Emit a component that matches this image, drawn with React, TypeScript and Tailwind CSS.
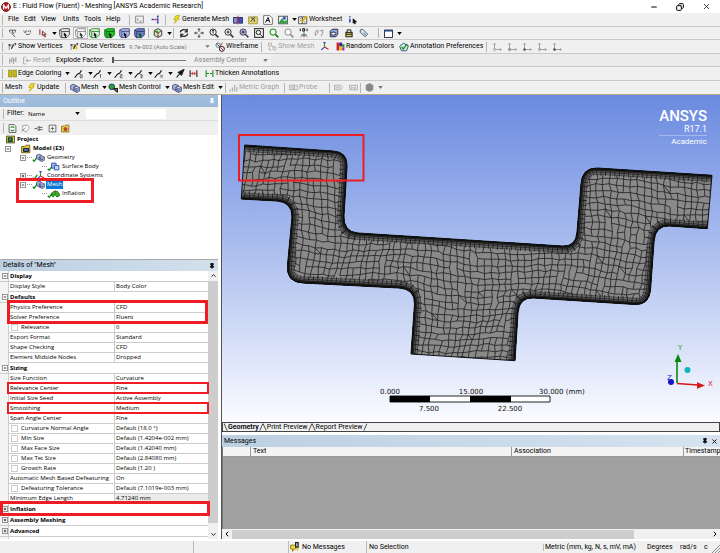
import * as React from "react";
import { Pin, X, Minus, Copy, ChevronLeft, ChevronRight, ChevronUp, ChevronDown } from "lucide-react";

type IconProps = { className?: string; children: React.ReactNode };

const Svg = ({ className = "size-[9px]", children }: IconProps) => (
  <svg viewBox="0 0 16 16" className={`${className} shrink-0`} fill="none" stroke="#222" strokeWidth="1.6">
    {children}
  </svg>
);

const Caret = ({ className = "text-black" }: { className?: string }) => (
  <svg viewBox="0 0 6 4" className={`h-[3px] w-[5px] shrink-0 ${className}`} fill="currentColor">
    <path d="M0 0h6L3 4z" />
  </svg>
);

const Sep = ({ className = "" }: { className?: string }) => (
  <span className={`h-[10px] w-px shrink-0 bg-[#b4b4b4] ${className}`} />
);

const Bolt = () => (
  <Svg>
    <path d="M7 1h7l-4 5h3L4 15l3-7H3z" fill="#f4dc10" stroke="#a89010" strokeWidth="1" />
  </Svg>
);

const Cube = ({ face = "#eee", edge = "#333", mark = "#111" }) => (
  <Svg className="size-[11px]">
    <path d="M1 3l4-2h10v9l-4 4H3L1 11z" fill={face} stroke={edge} strokeWidth="1.2" />
    <path d="M1 3l3 2h11M4 5v9" stroke={edge} strokeWidth="1.2" />
    <path d="M7 6l5 5h-2l1 3h-2l-1-3-1 1z" fill={mark} stroke="none" />
  </Svg>
);

const MeshCube = ({ className = "size-[10px]" }: { className?: string }) => (
  <Svg className={className}>
    <path d="M1 4l4-2 5 2v6l-4 2-5-2z" fill="#a9b4dc" stroke="#26336f" strokeWidth="1.2" />
    <path d="M6 7l4-2 5 2v6l-4 2-5-2z" fill="#dfe4f6" stroke="#26336f" strokeWidth="1.2" />
    <path d="M6 7l5 2v6M11 9l4-2M8 8v6M6 10l5 2 4-2" stroke="#26336f" strokeWidth="1" />
  </Svg>
);

const Lens = ({ color = "#333", fill = "#fff", sign = "" }) => (
  <Svg className="size-[10px]">
    <circle cx="6.5" cy="6.5" r="5" fill={fill} stroke={color} />
    <path d="M10 10l5 5" stroke={color} strokeWidth="2.5" />
    {sign !== "" && <path d={sign} stroke="#223" />}
  </Svg>
);

const Triad = ({ origin = "#777" }: { origin?: string }) => (
  <Svg className="size-[10px]">
    <path d="M4 12V2M2 4l2-2 2 2M4 12h11M13 10l2 2-2 2" stroke="#888" strokeWidth="1.2" />
    <circle cx="4" cy="12" r="1.8" fill={origin} stroke="#777" strokeWidth="1" />
  </Svg>
);

const ColorTriad = () => (
  <Svg>
    <path d="M8 9V1" stroke="#1aa51a" strokeWidth="2" />
    <path d="M8 9l-6 5M6 1h4" stroke="#2a35d8" strokeWidth="2" />
    <path d="M8 9l7 4" stroke="#e02020" strokeWidth="2" />
  </Svg>
);

const Vertices = ({ fill = "none" }) => (
  <Svg>
    <path d="M2 14V5h12V3M2 5l4 4" stroke="#666" strokeWidth="1.2" />
    <rect x="7" y="6" width="6" height="7" fill={fill} stroke="none" />
    <path d="M1 5h3M6 12l4-7M12 2l2 2" strokeWidth="2" />
  </Svg>
);

const Frame = ({ stroke = "#999" }) => (
  <Svg>
    <path d="M1 2h5v5H1zM7 7l4 2M9 9h5v5H9zM2 9v5h4" stroke={stroke} strokeWidth="1.2" />
  </Svg>
);

const EdgeLine = ({ tag }: { tag: string }) => (
  <Svg className="size-[10px]">
    <path d="M1 14L6 8l3-1 3-5" stroke="#111" strokeWidth="1.8" />
    <path d={tag} stroke="#444" strokeWidth="1.2" />
  </Svg>
);

const Folder = () => (
  <Svg>
    <path d="M1 4h5l2-2h6v12H1z" fill="#f1d548" stroke="#86701a" />
    <circle cx="8" cy="9" r="3" fill="#c8483c" stroke="#722" strokeWidth="1" />
  </Svg>
);

type ToolProps = {
  label: string;
  width: string;
  icon?: React.ReactNode;
  text?: boolean;
  caret?: boolean;
  muted?: boolean;
};

// Toolbar button; icon-only buttons keep their label for assistive tech
const Tool = ({ label, width, icon, text, caret, muted }: ToolProps) => (
  <button
    type="button"
    aria-label={label}
    disabled={muted}
    className={`flex h-[12px] shrink-0 items-center gap-px whitespace-nowrap ${width} ${muted ? "text-[#a0a0a0]" : "text-black"}`}
  >
    {icon}
    {text && <span>{label}</span>}
    {caret && <Caret className={muted ? "ml-[3px] text-[#777]" : "ml-[3px] text-black"} />}
  </button>
);

const Bar = ({ className = "h-[13px]", children }: { className?: string; children: React.ReactNode }) => (
  <div className={`flex shrink-0 items-center overflow-hidden border-b border-[#c9c9c9] bg-[#f0f0f0] pl-[2px] ${className}`}>
    <Sep className="mr-[5px]" />
    {children}
  </div>
);

const menus = [
  { label: "File", width: "w-[16px]" },
  { label: "Edit", width: "w-[17px]" },
  { label: "View", width: "w-[22px]" },
  { label: "Units", width: "w-[21px]" },
  { label: "Tools", width: "w-[22px]" },
  { label: "Help", width: "w-[22px]" },
];

const selectTools: { label: string; icon: React.ReactNode }[] = [
  { label: "Vertex filter", icon: <Cube /> },
  { label: "Edge filter", icon: <Cube face="#fff" edge="#777" mark="#333" /> },
  { label: "Face filter", icon: <Cube face="#dff5df" edge="#1c7a1c" /> },
  { label: "Body filter", icon: <Cube face="#22cc22" edge="#0c5c0c" /> },
  { label: "Element filter", icon: <Cube face="#aab2e6" edge="#3b4378" /> },
  { label: "Node filter", icon: <Cube face="#6f7fc8" edge="#26305f" mark="#0a5a1a" /> },
];

const viewTools: { label: string; icon: React.ReactNode }[] = [
  { label: "Rotate", icon: <Svg className="size-[10px]"><path d="M2 7c1-5 9-6 11-2M14 9c-1 5-9 6-11 2M13 1v5H9M3 15v-5h4" strokeWidth="2" /></Svg> },
  { label: "Pan", icon: <Svg className="size-[10px]"><path d="M8 1v5M8 10v5M1 8h5M10 8h5M6 3l2-2 2 2M6 13l2 2 2-2M3 6L1 8l2 2M13 6l2 2-2 2" strokeWidth="1.3" /></Svg> },
  { label: "Zoom", icon: <Lens sign="M6.5 4v5M4.5 5l2-2 2 2" /> },
  { label: "Zoom in", icon: <Lens sign="M4 6.5h5M6.5 4v5" /> },
  { label: "Box zoom", icon: <Lens color="#445" fill="#b8bff0" sign="M4 6.5h5M6.5 4v5" /> },
  { label: "Zoom to fit", icon: <Svg className="size-[10px]"><rect x="1" y="1" width="14" height="14" /><circle cx="7" cy="7" r="3.5" /><path d="M10 10l4 4" /></Svg> },
  { label: "Zoom to selection", icon: <Lens color="#177a17" fill="#e6ffe6" /> },
  { label: "Magnifier", icon: <Lens color="#888" /> },
  { label: "Previous view", icon: <Svg className="size-[10px]"><path d="M2 1v4M6 1v4h3V1H6M13 1v4" stroke="#111" /><path d="M8 7v8M4 11h8" stroke="#167c74" /><path d="M3 14l3-3M13 14l-3-3" stroke="#d03030" /></Svg> },
  { label: "Next view", icon: <Svg className="size-[10px]"><path d="M2 12V6l4-3v6M9 5l5-2v5l-3 5M2 12l3-3" stroke="#999" /></Svg> },
  { label: "Isometric", icon: <Svg className="size-[10px]"><path d="M2 5l3-3h9v8l-3 4H2z" fill="#86aed8" stroke="#334" /><ellipse cx="7" cy="9" rx="4" ry="2.5" fill="#fff" stroke="#224" /></Svg> },
  { label: "Look at", icon: <Svg className="size-[10px]"><path d="M5 7V3h6v4" /><rect x="3" y="7" width="10" height="7" fill="#d9c95a" /><path d="M3 10h10" /></Svg> },
  { label: "Tags", icon: <Svg className="size-[10px]"><path d="M2 3l4-1 8 8-4 4-8-7z" fill="#d3e6ee" stroke="#567" /><path d="M7 8l4 3" stroke="#567" /></Svg> },
];

const edgeTools = [
  { tag: "M10 9h3v5h-3z", width: "w-[19px]" },
  { tag: "M12 8v6", width: "w-[21px]" },
  { tag: "M10 9h3v2h-3v3h4", width: "w-[20px]" },
  { tag: "M10 9h3v5h-3M10 11h3", width: "w-[20px]" },
  { tag: "M10 9l4 5M14 9l-4 5", width: "w-[22px]" },
];

const Toolbars = () => (
  <div className="shrink-0 border-b border-[#b3a78f] text-[7px] leading-none">
    <Bar className="h-[14px]">
      <nav className="flex">
        {menus.map((m) => (
          <Tool key={m.label} label={m.label} width={m.width} text />
        ))}
      </nav>
      <Sep className="mr-[5px] ml-px" />
      <Tool label="Command window" width="w-[16px]" icon={<Svg><path d="M1 2h14v12H1zM3 6l3 2-3 2M8 11h4" stroke="#888" /></Svg>} />
      <Tool label="Object generator" width="w-[14px]" icon={<Svg><path d="M6 8h4" stroke="#d02020" strokeWidth="2.5" /><path d="M1 8h4M12 1v4M12 6v4M12 11v4" stroke="#3040c0" strokeWidth="3" /></Svg>} />
      <Sep className="mr-[6px]" />
      <Tool label="Generate Mesh" width="w-[61px]" icon={<Bolt />} text />
      <Tool label="Section plane" width="w-[15px]" icon={<Svg className="size-[10px]"><rect x="1" y="4" width="6" height="9" fill="#8592dd" stroke="#26336f" /><rect x="9" y="4" width="6" height="9" fill="#3b50c0" stroke="#26336f" /><path d="M8 1v14" stroke="#d03030" /></Svg>} />
      <Tool label="Comment" width="w-[15px]" icon={<Svg className="size-[10px]"><path d="M1 3h14v11H1z" fill="#e4d66a" stroke="#a89b50" /><path d="M4 11l7-8M5 5h3M10 6v5" stroke="#444" /></Svg>} />
      <Tool label="Text" width="w-[15px]" icon={<Svg className="size-[10px]"><path d="M1 1h10l4 4v10H1z" fill="#fff" stroke="#777" /><path d="M4 12l4-8 3 8M6 9h4" stroke="#111" /></Svg>} />
      <Tool label="Image" width="w-[20px]" caret icon={<Svg className="size-[10px]"><rect x="1" y="2" width="14" height="12" fill="#fff" stroke="#555" /><path d="M2 11l4-6 4 5 4-3v6H2z" fill="#2ba43a" stroke="none" /><circle cx="10" cy="5" r="2.5" fill="#2a56d0" stroke="none" /></Svg>} />
      <Tool label="Worksheet" width="w-[50px]" text icon={<Svg className="size-[10px]"><path d="M1 3h6v11H1zM7 3h7v11H7z" fill="#fff" stroke="#555" /><path d="M6 11L14 2" stroke="#d8b400" strokeWidth="3" /><path d="M3 6h2M3 9h2M9 11h3" strokeWidth="1" /></Svg>} />
      <Tool label="Selection information" width="w-[12px]" icon={<Svg className="size-[10px]"><path d="M3 2v2M3 6v6" stroke="#3040c0" strokeWidth="2.5" /><path d="M8 6l6 5-3 0 1 3-2 0-1-3-1 2z" fill="#111" stroke="#111" strokeWidth="1" /></Svg>} />
    </Bar>
    <Bar>
      <Tool label="Direction" width="w-[15px]" icon={<Svg><path d="M2 2h12M3 2v4M8 2v4M13 2v4M5 7h6L8 10l5 4" stroke="#555" /></Svg>} />
      <Tool label="Coordinate" width="w-[15px]" icon={<Svg><path d="M1 3l3 4 2-5M8 4h3M12 2l2 4M5 9l4 1 4-2" stroke="#555" /></Svg>} />
      <Tool label="Select mode" width="w-[20px]" caret icon={<Svg className="size-[10px]"><path d="M3 2v9M7 5l6 5-3 0 2 4-2 0-1-4-2 2z" stroke="#853030" fill="#fff" /></Svg>} />
      {selectTools.map((t, i) => (
        <Tool
          key={t.label}
          label={t.label}
          icon={t.icon}
          width={i === 1 ? "w-[15px] border border-[#bbb] bg-[#f9f9f9] pl-px" : "w-[15px] pl-px"}
        />
      ))}
      <Sep className="mr-[4px]" />
      <Tool label="Extend selection" width="w-[20px]" caret icon={<Svg className="size-[10px]"><path d="M8 1l6 3v8l-6 3-6-3V4z" fill="#c8e8c8" stroke="#444" /><path d="M2 4l6 4 6-4M8 8v7" stroke="#a03030" /><circle cx="6" cy="6" r="2" fill="#17a317" stroke="none" /></Svg>} />
      <Sep className="mr-[4px]" />
      {viewTools.map((t) => (
        <Tool key={t.label} label={t.label} icon={t.icon} width="w-[15px] pl-px" />
      ))}
      <Sep className="mx-[5px]" />
      <Tool label="Viewports" width="w-[20px]" caret icon={<Svg><rect x="1" y="2" width="14" height="13" fill="#fff" stroke="#224" /><path d="M1 3h14" stroke="#224880" strokeWidth="3" /></Svg>} />
    </Bar>
    <Bar className="h-[14px]">
      <Tool label="Show Vertices" width="w-[62px]" text icon={<Vertices />} />
      <Tool label="Close Vertices" width="w-[59px]" text icon={<Vertices fill="#e6cb28" />} />
      <span className="w-[76px] shrink-0 whitespace-nowrap text-[6px] text-[#777]">9.7e-002 (Auto Scale)</span>
      <Caret className="mr-[5px] text-[#888]" />
      <Tool label="Wireframe" width="w-[46px]" text icon={<Svg className="size-[10px]"><circle cx="5" cy="5" r="3.5" stroke="#2d8c98" /><circle cx="11" cy="11" r="4" stroke="#222" /><path d="M2 2l12 12M12 1l-4 6" stroke="#c03838" /></Svg>} />
      <Sep className="mr-[6px]" />
      <Tool label="Show Mesh" width="w-[52px]" text muted icon={<Frame />} />
      <Tool label="Show triad" width="w-[16px]" icon={<ColorTriad />} />
      <Tool label="Random Colors" width="w-[63px]" text icon={<Svg><path d="M1 1h5v14H1z" fill="#d22" stroke="none" /><path d="M6 1h5v7H6z" fill="#22a" stroke="none" /><path d="M6 8h5v7H6z" fill="#e3c022" stroke="none" /><path d="M11 4h4v6h-4z" fill="#292" stroke="none" /><path d="M11 10h4v5h-4z" fill="#a2a" stroke="none" /></Svg>} />
      <Tool label="Annotation Preferences" width="w-[87px]" text icon={<Svg className="size-[10px]"><path d="M1 7l6-5 8 4-3 8-8 0z" fill="#dff0e2" stroke="#285a86" /><path d="M4 8l3 3 6-8" stroke="#16921f" strokeWidth="2.2" /></Svg>} />
      <Sep className="mr-[5px]" />
      {["#fff", "#999", "#444", "#ddd", "#333"].map((c, i) => (
        <Tool key={i} label={`Triad ${i + 1}`} width="w-[15px]" icon={<Triad origin={c} />} />
      ))}
    </Bar>
    <Bar>
      <Tool label="Assembly" width="w-[15px]" muted icon={<Svg><path d="M3 4v10M7 2v10M3 8h4M10 3v11M14 2v9M10 7h4" stroke="#999" /></Svg>} />
      <Tool label="Reset" width="w-[33px]" muted text icon={<Svg><path d="M5 2H1v12h4M5 8h9M9 5L5 8l4 3" stroke="#aaa" /></Svg>} />
      <label htmlFor="explode" className="w-[56px] shrink-0 whitespace-nowrap">Explode Factor:</label>
      <input
        id="explode"
        type="range"
        defaultValue={0}
        className="mr-[8px] h-[7px] w-[74px] shrink-0 appearance-none bg-[linear-gradient(#777,#777)] bg-[length:100%_1px] bg-center bg-no-repeat [&::-webkit-slider-thumb]:h-[6px] [&::-webkit-slider-thumb]:w-[2px] [&::-webkit-slider-thumb]:appearance-none [&::-webkit-slider-thumb]:bg-[#555]"
      />
      <select aria-label="Explode center" className="h-[9px] w-[69px] shrink-0 appearance-none text-[7px] leading-none text-[#888]">
        <option>Assembly Center</option>
      </select>
      <Caret className="mr-[3px] text-[#777]" />
      <span className="h-full flex-1 bg-[#ebebeb]" />
    </Bar>
    <Bar className="h-[14px]">
      <Tool label="Edge Coloring" width="w-[66px]" text caret icon={<Svg><path d="M1 2h6v12H1zM9 2h6v12H9z" fill="#c9bc12" stroke="#77700c" strokeWidth="1" /></Svg>} />
      {edgeTools.map((e, i) => (
        <Tool key={i} label={`Edge style ${i}`} width={e.width} caret icon={<EdgeLine tag={e.tag} />} />
      ))}
      <Tool label="Edge direction" width="w-[13px]" icon={<Svg><path d="M1 15L7 8M14 1L4 6l6 5z" fill="#111" strokeWidth="2" /></Svg>} />
      <Tool label="Connection" width="w-[16px]" icon={<Svg><path d="M2 2v12M14 2v12" stroke="#222" strokeWidth="2" /><path d="M3 8h10M6 5v6M10 5v6" stroke="#d04040" /></Svg>} />
      <Tool label="Thicken Annotations" width="w-[80px]" text icon={<Svg><path d="M2 2v12M14 2v12" stroke="#17881c" strokeWidth="2" /><path d="M3 8h4M9 8h4" stroke="#17881c" strokeWidth="2" /></Svg>} />
    </Bar>
    <div className="flex h-[13px] items-center overflow-hidden bg-[#f0f0f0] pl-[2px]">
      <Sep className="mr-[2px]" />
      <span className="w-[22px] shrink-0">Mesh</span>
      <Tool label="Update" width="w-[38px]" text icon={<Bolt />} />
      <Sep className="mr-[4px]" />
      <Tool label="Mesh" width="w-[38px]" text caret icon={<MeshCube />} />
      <Tool label="Mesh Control" width="w-[64px]" text caret icon={<Svg className="size-[10px]"><circle cx="6" cy="6" r="4.5" fill="#29a329" stroke="#1d3a78" /><path d="M9 9h6v6" stroke="#222" strokeWidth="2.4" /><path d="M9 9l5 5" strokeWidth="2" /></Svg>} />
      <Tool label="Mesh Edit" width="w-[53px]" text caret icon={<MeshCube />} />
      <Sep className="mr-[3px]" />
      <Tool label="Metric Graph" width="w-[55px]" text muted icon={<Svg><path d="M2 15v-4M6 15V8M10 15V3M14 15V7" stroke="#aaa" strokeWidth="2" /></Svg>} />
      <Sep className="mr-[4px]" />
      <Tool label="Probe" width="w-[40px]" text muted icon={<Svg><path d="M1 4h14v8H1zM4 6v4M7 6v4h3V6z" stroke="#aaa" /></Svg>} />
      <Sep className="mr-[4px]" />
      <Tool label="Max" width="w-[15px]" muted icon={<Svg><path d="M1 4h11l3 4-3 4H1zM4 6v4M7 6v4M10 6v4" stroke="#aaa" /></Svg>} />
      <Tool label="Min" width="w-[11px]" muted icon={<Svg><path d="M1 4h14v8H1zM4 6v4l3-2 4 2V6" stroke="#aaa" /></Svg>} />
      <Sep className="mr-[4px]" />
      <Tool label="Iso surface" width="w-[20px]" muted caret icon={<Svg><path d="M8 1l6 3v8l-6 3-6-3V4z" fill="#888" stroke="#888" /></Svg>} />
    </div>
  </div>
);

const Toggle = ({ open }: { open: boolean }) => (
  <svg viewBox="0 0 7 7" className="size-[6px] shrink-0" fill="#fff" stroke="#888" strokeWidth="1">
    <rect x=".5" y=".5" width="6" height="6" />
    <path d={open ? "M2 3.5h3" : "M2 3.5h3M3.5 2v3"} stroke="#222" />
  </svg>
);

const Check = () => (
  <svg viewBox="0 0 8 8" className="-mr-[2px] size-[6px] shrink-0 self-end" fill="none" stroke="#118a11" strokeWidth="1.8">
    <path d="M1 5l2 2 4-6" />
  </svg>
);

type TreeRow = {
  label: string;
  indent: string;
  icon: React.ReactNode;
  open?: boolean;
  check?: boolean;
  bold?: boolean;
  selected?: boolean;
};

const tree: TreeRow[] = [
  { label: "Project", indent: "pl-[6px]", bold: true, icon: <Svg><rect x="1" y="2" width="14" height="12" fill="#dfd24a" stroke="#445a22" /><rect x="4" y="5" width="7" height="7" fill="#2b7c6c" /></Svg> },
  { label: "Model (E3)", indent: "pl-[5px]", open: true, bold: true, icon: <Svg className="ml-[10px] size-[10px]"><path d="M1 4h5l2-2h6v12H1z" fill="#ecd043" stroke="#75641a" /><path d="M4 7h8v5H4z" fill="#4567b8" stroke="#223" /></Svg> },
  { label: "Geometry", indent: "pl-[20px]", open: true, check: true, icon: <MeshCube className="size-[9px]" /> },
  { label: "Surface Body", indent: "pl-[41px]", check: true, icon: <Svg><path d="M1 2h8v9H1z" fill="#9fb8ee" stroke="#2b4fa8" /><path d="M6 6h8v8H6z" fill="#c3d6f7" stroke="#2b4fa8" /></Svg> },
  { label: "Coordinate Systems", indent: "pl-[20px]", open: false, check: true, icon: <ColorTriad /> },
  { label: "Mesh", indent: "pl-[20px]", open: true, check: true, selected: true, icon: <MeshCube className="size-[9px]" /> },
  { label: "Inflation", indent: "pl-[41px]", check: true, icon: <Svg><path d="M1 12C1 1 15 1 15 12l-5 2c0-4-5-4-6 0z" fill="#31b531" stroke="#116a11" /><path d="M8 3v6" stroke="#c33" /></Svg> },
];

const Outline = () => (
  <section className="flex min-h-0 flex-1 flex-col bg-white text-[7px] leading-none">
    <header className="flex h-[12px] shrink-0 items-center justify-between bg-gradient-to-b from-[#a3bfdf] to-[#9db9d9] pr-[3px] pl-[3px] text-white">
      <h2>Outline</h2>
      <Pin className="size-[6px]" fill="white" />
    </header>
    <div className="flex h-[14px] shrink-0 items-center border-b border-[#ddd] bg-[#f0f0f0] pl-[3px]">
      <Sep className="mr-[3px]" />
      <label htmlFor="filter" className="w-[21px]">Filter:</label>
      <select id="filter" className="h-[9px] w-[47px] appearance-none bg-[#f0f0f0] font-['Open_Sans','Noto_Sans',sans-serif] text-[6px] leading-none">
        <option>Name</option>
      </select>
      <Caret />
      <input aria-label="Filter text" className="ml-[6px] h-[10px] w-[80px] bg-white" />
    </div>
    <div className="flex h-[14px] shrink-0 items-center gap-[3px] bg-[#f0f0f0] pl-[3px]">
      <Sep className="mr-px" />
      <Tool label="Refresh" width="w-[10px]" icon={<Svg><path d="M2 1h9l3 3v11H2z" fill="#fff" stroke="#555" /><path d="M5 7c1-3 5-3 6 0M11 10c-1 3-5 3-6 0" stroke="#18901d" strokeWidth="2" /></Svg>} />
      <Tool label="Tag" width="w-[10px]" icon={<Svg><path d="M3 3l8-1 4 5-6 7-6-3z" fill="#fff" stroke="#999" /><path d="M1 13l8-7" stroke="#88a" /></Svg>} />
      <Tool label="Flat tree" width="w-[11px]" icon={<Svg><path d="M1 8h4l4-4v8L5 8M9 6h6M9 10h6" stroke="#555" /></Svg>} />
      <Tool label="Expand all" width="w-[10px]" icon={<Svg><path d="M2 2h12v12H2zM5 8h6M8 5v6" stroke="#666" /></Svg>} />
      <Tool label="Hide folders" width="w-[11px]" icon={<Folder />} />
    </div>
    <ul className="relative flex-1 font-['Open_Sans','Noto_Sans',sans-serif]">
      {tree.map((row) => (
        <li key={row.label} className={`flex h-[9px] items-center text-[6px] ${row.indent}`}>
          {row.open !== undefined && <Toggle open={row.open} />}
          {row.check && <span className="ml-px w-[5px] shrink-0 border-t border-dotted border-[#999]" />}
          {row.check && <Check />}
          {row.icon}
          <span
            className={`ml-px h-[9px] px-px leading-[9px] whitespace-nowrap ${row.bold ? "font-bold" : ""} ${row.selected ? "bg-[#0a78d4] text-white" : ""}`}
          >
            {row.label}
          </span>
        </li>
      ))}
      <li aria-hidden="true" className="absolute top-[43px] left-[16px] h-[25px] w-[78px] border-3 border-[#ee1c24]" />
    </ul>
  </section>
);

type Detail = { name: string; value?: string; group?: boolean; open?: boolean; box?: boolean; readOnly?: boolean };

const details: Detail[] = [
  { name: "Display", group: true, open: true },
  { name: "Display Style", value: "Body Color" },
  { name: "Defaults", group: true, open: true },
  { name: "Physics Preference", value: "CFD" },
  { name: "Solver Preference", value: "Fluent" },
  { name: "Relevance", value: "0", box: true },
  { name: "Export Format", value: "Standard" },
  { name: "Shape Checking", value: "CFD" },
  { name: "Element Midside Nodes", value: "Dropped" },
  { name: "Sizing", group: true, open: true },
  { name: "Size Function", value: "Curvature" },
  { name: "Relevance Center", value: "Fine" },
  { name: "Initial Size Seed", value: "Active Assembly" },
  { name: "Smoothing", value: "Medium" },
  { name: "Span Angle Center", value: "Fine" },
  { name: "Curvature Normal Angle", value: "Default (18.0 °)", box: true },
  { name: "Min Size", value: "Default (1.4204e-002 mm)", box: true },
  { name: "Max Face Size", value: "Default (1.42040 mm)", box: true },
  { name: "Max Tet Size", value: "Default (2.84080 mm)", box: true },
  { name: "Growth Rate", value: "Default (1.20 )", box: true },
  { name: "Automatic Mesh Based Defeaturing", value: "On" },
  { name: "Defeaturing Tolerance", value: "Default (7.1019e-003 mm)", box: true },
  { name: "Minimum Edge Length", value: "4.71240 mm", readOnly: true },
  { name: "Inflation", group: true, open: false },
  { name: "Assembly Meshing", group: true, open: false },
  { name: "Advanced", group: true, open: false },
  { name: "Statistics", group: true, open: false },
];

const Details = () => (
  <section className="flex h-[280px] shrink-0 flex-col border-t border-[#aaa] bg-white text-[7px]">
    <header className="flex h-[11px] shrink-0 items-center justify-between bg-gradient-to-r from-[#bccfe2] to-[#d3e0ec] px-[3px] leading-none">
      <h2>Details of "Mesh"</h2>
      <Pin className="size-[6px]" fill="black" strokeWidth={3} />
    </header>
    <div className="relative flex min-h-0 flex-1 overflow-hidden font-['Open_Sans','Noto_Sans',sans-serif] text-[6px]">
      <table className="w-full table-fixed border-separate border-spacing-0 self-start">
        <colgroup>
          <col className="w-[9px]" />
          <col className="w-[106px]" />
          <col />
        </colgroup>
        <tbody>
          {details.map((d) =>
            d.group ? (
              <tr key={d.name} className="leading-[10px]">
                <td className="border-r border-b border-[#ccc] bg-[#f4f4f4] p-0 pl-[2px]">
                  <Toggle open={!!d.open} />
                </td>
                <th colSpan={2} className="border-b border-[#ccc] p-0 pl-px text-left font-bold">
                  {d.name}
                </th>
              </tr>
            ) : (
              <tr key={d.name} className="leading-[9px] whitespace-nowrap">
                <td className="border-r border-[#ccc] bg-[#f4f4f4] p-0" />
                <td className="h-[10px] border-r border-b border-[#ccc] p-0 pl-px">
                  {d.box ? (
                    <label className="flex items-center gap-[3px]">
                      <input type="checkbox" className="ml-px size-[7px] shrink-0 appearance-none border border-[#ccc] bg-white" />
                      {d.name}
                    </label>
                  ) : (
                    d.name
                  )}
                </td>
                <td className={`h-[10px] border-b border-[#ccc] p-0 pl-px ${d.readOnly ? "bg-[#ebebeb]" : ""}`}>{d.value}</td>
              </tr>
            )
          )}
        </tbody>
      </table>
      <div className="flex w-[10px] shrink-0 flex-col items-center justify-between bg-[#f0f0f0] py-px">
        <ChevronUp className="size-[7px]" strokeWidth={3} />
        <div className="mt-[2px] mb-[8px] w-full flex-1 bg-[#cdcdcd]" />
        <ChevronDown className="size-[7px]" strokeWidth={3} />
      </div>
      <div className="absolute top-[29px] left-[7px] h-[24px] w-[201px] border-3 border-[#ee1c24]" />
      <div className="absolute top-[111px] left-[7px] h-[12px] w-[202px] border-2 border-[#ee1c24]" />
      <div className="absolute top-[131px] left-[7px] h-[12px] w-[202px] border-2 border-[#ee1c24]" />
      <div className="absolute top-[230px] left-0 h-[15px] w-[210px] border-3 border-[#ee1c24]" />
    </div>
  </section>
);

// Pipe silhouette, split in its walls so the open ends stay unshaded
const walls = [
  "M244.7 145L333 151Q348 152 347 167L344 215Q343 232 358 233L562 246Q576 247 577 232L581 184Q582 168 597 168L712 175.3",
  "M707.3 228.7L670 226Q655 225 654 242L650.5 290Q649 305 635 304.5L534 298Q519 297 518 313L515 360.7",
  "M411 354L414.5 304Q415 289 399 288L303 283Q286 282 287.5 265L292 217Q292 202 277 201L241.3 199",
];
const body =
  "M244.7 145L333 151Q348 152 347 167L344 215Q343 232 358 233L562 246Q576 247 577 232L581 184Q582 168 597 168L712 175.3L707.3 228.7L670 226Q655 225 654 242L650.5 290Q649 305 635 304.5L534 298Q519 297 518 313L515 360.7L411 354L414.5 304Q415 289 399 288L303 283Q286 282 287.5 265L292 217Q292 202 277 201L241.3 199Z";

const rand = (i: number, j: number) => {
  const v = Math.sin(i * 127.1 + j * 311.7) * 43758.5453;
  return v - Math.floor(v);
};

// Node of the distorted quad grid
const node = (i: number, j: number) => {
  const u = i * 6.4;
  const v = j * 6.4;
  const x = u + 3 * Math.sin(v / 22 + u / 40) + (rand(i, j) - 0.5) * 2.4;
  const y = v + 3 * Math.sin(u / 24 + v / 40) + (rand(j + 90, i) - 0.5) * 2.4;
  return `${(238 + x - y * 0.07).toFixed(1)} ${(112 + y + x * 0.065).toFixed(1)}`;
};

const buildGrid = () => {
  let d = "";
  for (let i = -2; i < 80; i++) {
    for (let j = -6; j < 43; j++) {
      const r = rand(i + 7, j + 31);
      if (r > 0.06) d += `M${node(i, j)}L${node(i + 1, j)}`;
      if (r < 0.94) d += `M${node(i, j)}L${node(i, j + 1)}`;
      if (r > 0.49 && r < 0.505) d += `M${node(i, j)}L${node(i + 1, j + 1)}`;
    }
  }
  return d;
};

const grid = buildGrid();

// Compressed element rows towards the wall
const layers = [
  { color: "#3a3a3a", width: 13 },
  { color: "#7c7c7c", width: 11.6 },
  { color: "#2a2a2a", width: 8.6 },
  { color: "#626262", width: 7.4 },
  { color: "#1c1c1c", width: 5.2 },
  { color: "#404040", width: 4.2 },
  { color: "#0c0c0c", width: 2.8 },
];

const Scene = () => (
  <svg viewBox="222 95 498 327" className="block h-full w-full" preserveAspectRatio="xMidYMid meet" fontFamily="'DejaVu Sans', sans-serif" fontSize="7">
    <defs>
      <clipPath id="pipe">
        <path d={body} />
      </clipPath>
    </defs>
    <path d={body} fill="#8a8a8a" />
    <g clipPath="url(#pipe)" fill="none">
      <path d={grid} stroke="#1e1e1e" strokeWidth=".8" />
      {layers.map((l) =>
        walls.map((w) => <path key={l.color + w} d={w} stroke={l.color} strokeWidth={l.width} />)
      )}
      {walls.map((w) => (
        <path key={w} d={w} stroke="#222" strokeWidth="15" strokeDasharray=".8 3.8" />
      ))}
      {walls.map((w) => (
        <path key={w} d={w} stroke="#000" strokeOpacity=".2" strokeWidth="11" />
      ))}
    </g>
    <path d={body} fill="none" stroke="#111" strokeWidth="1" />
    <rect x="239" y="135" width="124.500" height="45.500" fill="none" stroke="#ee1c24" strokeWidth="2" />

    <path d="M390 396h160v6H390z" fill="#fff" stroke="#222" />
    <path d="M390 396h40v6h-40zM470 396h41v6h-41z" fill="#000" />
    <g fill="#111">
      <text x="390" y="394" textAnchor="middle">0.000</text>
      <text x="471" y="394" textAnchor="middle">15.000</text>
      <text x="539" y="394">30.000 (mm)</text>
      <text x="429" y="411" textAnchor="middle">7.500</text>
      <text x="510" y="411" textAnchor="middle">22.500</text>
    </g>

    <path d="M677 383V361" stroke="#0a870f" strokeWidth="1.6" />
    <path d="M678 354l3.5 8h-7z" fill="#0a870f" />
    <path d="M677 383.500l21 1.500" stroke="#d21818" strokeWidth="1.6" />
    <path d="M705 385.500l-8 3.300v-6.600z" fill="#d21818" />
    <circle cx="671" cy="382" r="3" fill="#1616c8" />
    <circle cx="687.500" cy="370" r="3" fill="#10b4bc" />
    <text x="678" y="350" fill="#1da31d">Y</text>
    <text x="708" y="386" fill="#d22">X</text>
    <text x="667" y="380" fill="#22c">Z</text>
  </svg>
);

const tabs = [
  { label: "Geometry", active: true },
  { label: "Print Preview" },
  { label: "Report Preview" },
];

const Viewport = () => (
  <section className="relative min-h-0 flex-1 bg-gradient-to-b from-[#6b8ae0] via-[#b0c1ef] to-[#fbfcff]">
    <Scene />
    <div className="absolute top-[12px] right-[13px] text-right text-white">
      <p className="text-[15px] leading-[18px] font-medium">ANSYS</p>
      <p className="text-[9px] leading-[9px]">R17.1</p>
      <p className="mt-px border-t border-white/30 text-[8px] leading-[11px]">Academic</p>
    </div>
  </section>
);

const Tabs = () => (
  <div role="tablist" className="flex h-[10px] shrink-0 items-center border border-[#444] bg-[#f0f0f0] pl-px text-[7px] leading-none">
    {tabs.map((t) => (
      <React.Fragment key={t.label}>
        <svg viewBox="0 0 5 9" className="h-[8px] w-[4px] shrink-0" fill="none" stroke="#222">
          <path d="M0 0l4 9" />
        </svg>
        <button type="button" role="tab" aria-selected={!!t.active} className={`shrink-0 whitespace-nowrap ${t.active ? "font-semibold" : ""}`}>
          {t.label}
        </button>
        <svg viewBox="0 0 5 9" className="h-[8px] w-[4px] shrink-0" fill="none" stroke="#222">
          <path d="M5 0L1 9" />
        </svg>
      </React.Fragment>
    ))}
  </div>
);

const Messages = () => (
  <section className="mt-[3px] flex h-[104px] shrink-0 flex-col text-[7px] leading-none">
    <header className="flex h-[12px] shrink-0 items-center bg-gradient-to-r from-[#bccfe2] to-[#d6e3ef] px-[2px]">
      <h2 className="flex-1">Messages</h2>
      <Pin className="mr-[3px] size-[6px]" fill="black" strokeWidth={3} />
      <X className="size-[7px]" strokeWidth={3} />
    </header>
    <div className="flex-1 overflow-hidden border-l border-[#777] bg-[#a0a0a0]">
      <table className="w-full table-fixed border-separate border-spacing-0 bg-[#f3f3f3]">
        <thead>
          <tr className="h-[10px] text-left">
            <th className="w-[28px] border-r border-b border-[#999] p-0" aria-label="Status" />
            <th className="border-r border-b border-[#999] p-0 pl-[2px] font-normal">Text</th>
            <th className="w-[172px] border-r border-b border-[#999] p-0 pl-[2px] font-normal">Association</th>
            <th className="w-[36px] border-b border-[#999] p-0 pl-px font-normal">Timestamp</th>
          </tr>
        </thead>
      </table>
    </div>
    <div className="flex h-[10px] shrink-0 items-center justify-between bg-[#f0f0f0]">
      <ChevronLeft className="mx-px size-[8px]" strokeWidth={3} />
      <div className="mr-[77px] h-[9px] flex-1 bg-[#cdcdcd]" />
      <ChevronRight className="mr-px size-[8px]" strokeWidth={3} />
    </div>
  </section>
);

const StatusBar = () => (
  <footer className="mt-[2px] flex h-[12px] shrink-0 items-center bg-[#f0f0f0] text-[7px] leading-none whitespace-nowrap">
    <span className="h-full w-[194px] border-r border-[#bbb]" />
    <span className="h-full w-[95px] border-r border-[#bbb]" />
    <span className="flex h-full w-[78px] items-center gap-[2px] border-r border-[#bbb] pl-px">
      <Svg className="size-[10px]">
        <path d="M1 5h9v6H7l-3 4v-4H1z" fill="#f2d73d" stroke="#94801f" />
        <path d="M9 1h4v7H9z" fill="#ddd" stroke="#222" strokeWidth="2" />
        <path d="M9 10h6l-3 5z" fill="#f2d73d" stroke="none" />
      </Svg>
      No Messages
    </span>
    <span className="flex-1 pl-[2px]">No Selection</span>
    <span className="w-[104px] border-l border-[#bbb] pl-px">Metric (mm, kg, N, s, mV, mA)</span>
    <span className="w-[33px]">Degrees</span>
    <span className="w-[24px]">rad/s</span>
    <span className="w-[8px]">c</span>
    <svg viewBox="0 0 8 8" className="size-[8px] self-end" stroke="#888" fill="none">
      <path d="M0 8l8-8M3 8l5-5M6 8l2-2" />
    </svg>
  </footer>
);

export default function App() {
  return (
    <div className="flex h-screen flex-col overflow-hidden bg-white font-['Roboto','Noto_Sans',sans-serif] text-black">
      <header className="flex h-[13px] shrink-0 items-center gap-[2px] pl-px text-[7px] leading-none">
        <Svg className="size-[10px]">
          <circle cx="8" cy="8" r="7" fill="#b81d24" stroke="#611" />
          <path d="M4 12V5l4 5 4-5v7" stroke="#fff" strokeWidth="2" />
        </Svg>
        <h1 className="flex-1 whitespace-nowrap">E : Fluid Flow (Fluent) - Meshing [ANSYS Academic Research]</h1>
        <button type="button" aria-label="Minimize" className="mr-[16px]"><Minus className="size-[8px]" strokeWidth={3} /></button>
        <button type="button" aria-label="Restore" className="mr-[16px]"><Copy className="size-[8px] -scale-x-100" strokeWidth={3} /></button>
        <button type="button" aria-label="Close" className="mr-[9px]"><X className="size-[9px]" strokeWidth={2} /></button>
      </header>
      <Toolbars />
      <main className="flex min-h-0 flex-1">
        <aside className="flex w-[218px] shrink-0 flex-col">
          <Outline />
          <Details />
        </aside>
        <div className="ml-[3px] flex min-w-0 flex-1 flex-col border-l border-[#555]">
          <Viewport />
          <Tabs />
          <Messages />
        </div>
      </main>
      <StatusBar />
    </div>
  );
}
